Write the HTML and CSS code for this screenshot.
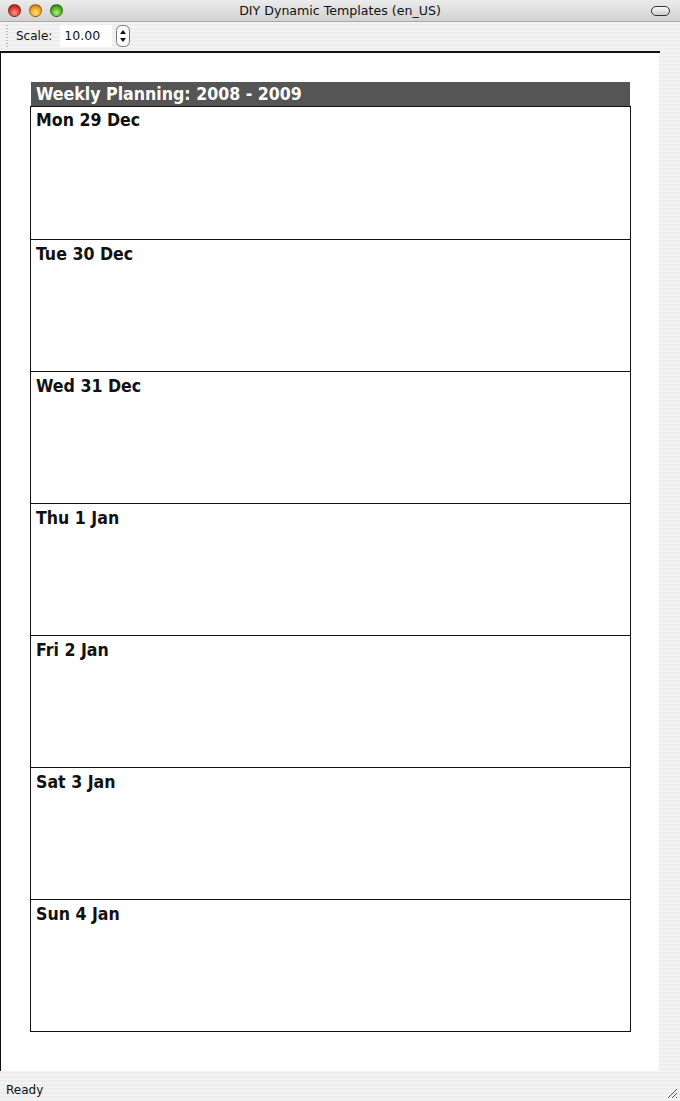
FILE: index.html
```html
<!DOCTYPE html>
<html>
<head>
<meta charset="utf-8">
<link rel="stylesheet" href="styles.css">
</head>
<body>
<div class="window">
  <div class="titlebar">
    <div class="lights">
      <span class="light red"></span>
      <span class="light yellow"></span>
      <span class="light green"></span>
    </div>
    <div class="title">DIY Dynamic Templates (en_US)</div>
    <div class="pill"></div>
  </div>
  <div class="toolbar">
    <span class="grip"></span>
    <span class="label">Scale:</span>
    <span class="field">10.00</span>
    <span class="stepper">
      <svg width="14" height="22" viewBox="0 0 14 22">
        <rect x="0.5" y="0.5" width="13" height="21" rx="5" fill="#fafafa" stroke="#777"/>
        <polygon points="7,5 4,9 10,9" fill="#111"/>
        <polygon points="7,17 4,13 10,13" fill="#111"/>
      </svg>
    </span>
  </div>
  <div class="main">
    <div class="canvas">
      <div class="planner">
        <div class="header">Weekly Planning: 2008 - 2009</div>
        <div class="days">
          <div class="day">Mon 29 Dec</div>
          <div class="day">Tue 30 Dec</div>
          <div class="day">Wed 31 Dec</div>
          <div class="day">Thu 1 Jan</div>
          <div class="day">Fri 2 Jan</div>
          <div class="day">Sat 3 Jan</div>
          <div class="day">Sun 4 Jan</div>
        </div>
      </div>
    </div>
    <div class="scrollgap"></div>
  </div>
  <div class="statusbar">
    <span class="status">Ready</span>
    <svg class="resize" width="12" height="12" viewBox="0 0 12 12">
      <line x1="11" y1="2" x2="2" y2="11" stroke="#555" stroke-width="1"/>
      <line x1="11" y1="6" x2="6" y2="11" stroke="#555" stroke-width="1"/>
      <line x1="11" y1="10" x2="10" y2="11" stroke="#555" stroke-width="1"/>
    </svg>
  </div>
</div>
</body>
</html>
```
FILE: styles.css
```css
html, body {
  margin: 0;
  padding: 0;
}
body {
  width: 680px;
  height: 1101px;
  overflow: hidden;
  font-family: "DejaVu Sans", "Liberation Sans", sans-serif;
  background: #ececec;
}
.window {
  width: 680px;
  height: 1101px;
  display: flex;
  flex-direction: column;
  background: repeating-linear-gradient(to bottom, #ededed 0, #ededed 2px, #f3f3f3 2px, #f3f3f3 4px);
}
.titlebar {
  height: 22px;
  display: flex;
  align-items: center;
  position: relative;
  background: linear-gradient(to bottom, #ebebeb, #d2d2d2);
  border-bottom: 1px solid #a8a8a8;
  box-sizing: border-box;
  flex-shrink: 0;
}
.lights {
  display: flex;
  gap: 8px;
  padding-left: 8px;
}
.light {
  width: 13px;
  height: 13px;
  border-radius: 50%;
  box-sizing: border-box;
  border: 1px solid rgba(0,0,0,0.35);
}
.red { background: radial-gradient(circle at 50% 70%, #ff9c8c 0, #e0342a 55%, #9c1410 100%); }
.yellow { background: radial-gradient(circle at 50% 70%, #ffe08a 0, #f0a21a 55%, #b0620a 100%); }
.green { background: radial-gradient(circle at 50% 70%, #b8f08a 0, #48b022 55%, #1e6e0a 100%); }
.title {
  position: absolute;
  left: 0;
  right: 0;
  text-align: center;
  font-size: 12.6px;
  color: #111;
  pointer-events: none;
}
.pill {
  margin-left: auto;
  margin-right: 10px;
  width: 17px;
  height: 8px;
  border: 1px solid #333;
  border-radius: 5px;
  background: linear-gradient(to bottom, #f8f8f8, #cfcfcf);
}
.toolbar {
  height: 31px;
  display: flex;
  align-items: center;
  box-sizing: border-box;
  border-bottom: 2px solid #111;
  margin-right: 20px;
  padding-bottom: 1px;
  font-size: 12px;
  color: #111;
  flex-shrink: 0;
}
.grip {
  width: 2px;
  height: 22px;
  margin-left: 6px;
  background: repeating-linear-gradient(to bottom, #bbb 0, #bbb 1px, transparent 1px, transparent 3px);
}
.label {
  margin-left: 8px;
}
.field {
  margin-left: 8px;
  width: 48px;
  height: 22px;
  line-height: 22px;
  padding-left: 4px;
  background: #fff;
  font-size: 12.5px;
}
.stepper {
  margin-left: 4px;
  display: flex;
}
.main {
  flex: 1;
  display: flex;
  min-height: 0;
}
.canvas {
  width: 659px;
  background: #fff;
  border-left: 1px solid #111;
  padding: 29px 0 0 29px;
  box-sizing: border-box;
}
.planner {
  width: 601px;
}
.header {
  height: 24px;
  margin: 0 1px;
  background: #555;
  color: #fff;
  font-family: "DejaVu Sans Condensed", "DejaVu Sans", sans-serif;
  font-weight: bold;
  font-size: 17.6px;
  line-height: 24px;
  padding-left: 5px;
  box-sizing: border-box;
}
.days {
  border: 1px solid #111;
}
.day {
  height: 132px;
  border-top: 1px solid #111;
  font-family: "DejaVu Sans Condensed", "DejaVu Sans", sans-serif;
  font-weight: bold;
  font-size: 17.6px;
  color: #111;
  padding: 4px 0 0 5px;
  box-sizing: border-box;
}
.day:first-child {
  border-top: none;
  padding-top: 3px;
}
.scrollgap {
  flex: 1;
}
.statusbar {
  height: 30px;
  display: flex;
  align-items: center;
  font-size: 12px;
  color: #111;
  position: relative;
  flex-shrink: 0;
}
.status {
  margin-left: 6px;
  margin-top: 8px;
}
.resize {
  position: absolute;
  right: 2px;
  bottom: 2px;
}
```
